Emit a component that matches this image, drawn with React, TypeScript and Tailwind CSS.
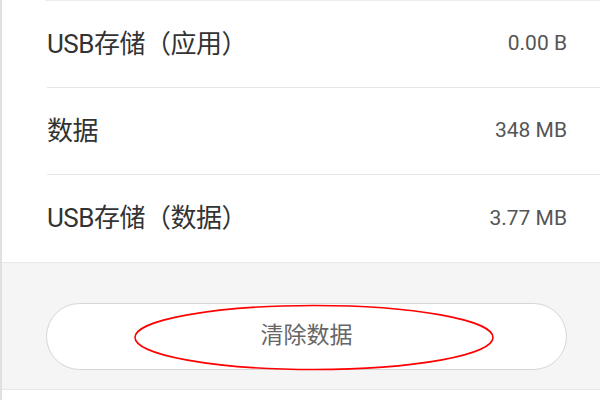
import React from 'react'

const rows = [
  { label: 'USB存储（应用）', value: '0.00 B' },
  { label: '数据', value: '348 MB' },
  { label: 'USB存储（数据）', value: '3.77 MB' },
]

const font = { fontFamily: 'Roboto, "Noto Sans CJK SC", sans-serif' }

export default function App() {
  return (
    <div className="relative w-[600px] h-[400px] overflow-hidden bg-white border-l-2 border-[#e0e0e0]" style={font}>
      {/* Storage rows */}
      <div className="ml-[43px] pl-[2px] border-t border-[#ececec]">
        {rows.map((row, i) => (
          <div
            key={row.value}
            className={`flex items-center justify-between h-[87px] pr-[33px] ${i < rows.length - 1 ? 'border-b border-[#e6e6e6]' : ''}`}
          >
            <span className="text-[26px] text-[#333] tracking-[-0.5px]">{row.label}</span>
            <span className="text-[21px] text-[#555]">{row.value}</span>
          </div>
        ))}
      </div>

      {/* Action area */}
      <div className="bg-[#f5f5f5] border-t border-b border-[#e8e8e8] pt-[40px] pb-[19px] pl-[44px] pr-[33px]">
        <button className="w-full h-[67px] rounded-full bg-white border border-[#d6d6d6] text-[23px] text-[#666]">
          清除数据
        </button>
      </div>

      {/* Red annotation */}
      <svg className="absolute left-0 top-0 pointer-events-none" width="600" height="400">
        <ellipse cx="312" cy="337.5" rx="179" ry="32" fill="none" stroke="#ff0000" strokeWidth="1.6" />
      </svg>
    </div>
  )
}
